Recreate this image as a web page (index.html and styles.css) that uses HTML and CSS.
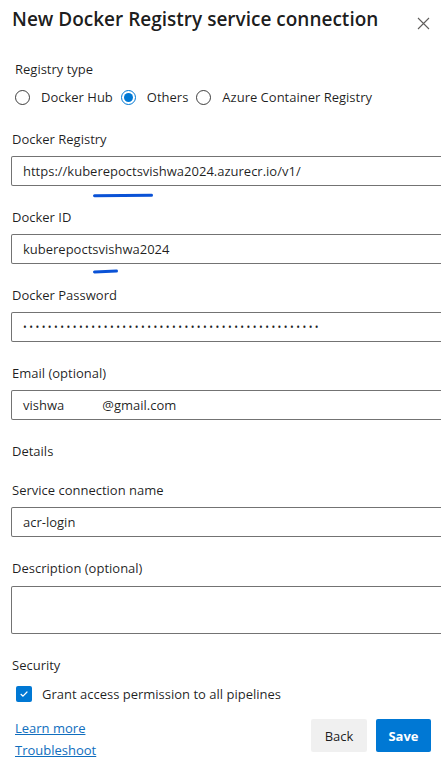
FILE: index.html
```html
<!DOCTYPE html>
<html>
<head>
<meta charset="utf-8">
<link rel="stylesheet" href="styles.css">
</head>
<body>
<div class="panel">
  <div class="header">
    <h1 class="title">New Docker Registry service connection</h1>
    <span class="close">
      <svg width="13" height="13" viewBox="0 0 13 13"><path d="M1 1L12 12M12 1L1 12" stroke="#605e5c" stroke-width="1.1" fill="none"/></svg>
    </span>
  </div>

  <div class="section">
    <div class="label">Registry type</div>
    <div class="radios">
      <label class="radio"><span class="circle"></span><span>Docker Hub</span></label>
      <label class="radio"><span class="circle checked"></span><span>Others</span></label>
      <label class="radio"><span class="circle"></span><span>Azure Container Registry</span></label>
    </div>
  </div>

  <div class="field first">
    <div class="label">Docker Registry</div>
    <div class="input">https://kuberepoctsvishwa2024.azurecr.io/v1/</div>
    <span class="mark mark-1"></span>
  </div>

  <div class="field">
    <div class="label">Docker ID</div>
    <div class="input">kuberepoctsvishwa2024</div>
    <span class="mark mark-2"></span>
  </div>

  <div class="field">
    <div class="label">Docker Password</div>
    <div class="input dots">••••••••••••••••••••••••••••••••••••••••••••••••</div>
  </div>

  <div class="field">
    <div class="label">Email (optional)</div>
    <div class="input">vishwa<span class="gap"></span>@gmail.com</div>
  </div>

  <div class="group-title">Details</div>

  <div class="field tight">
    <div class="label">Service connection name</div>
    <div class="input">acr-login</div>
  </div>

  <div class="field">
    <div class="label">Description (optional)</div>
    <div class="input area"></div>
  </div>

  <div class="group-title security">Security</div>
  <label class="check-row">
    <span class="checkbox">
      <svg width="10" height="10" viewBox="0 0 10 10"><path d="M2 5.3L4 7.2L8 3" stroke="#fff" stroke-width="1.2" fill="none" stroke-linecap="round" stroke-linejoin="round"/></svg>
    </span>
    <span>Grant access permission to all pipelines</span>
  </label>

  <div class="footer">
    <div class="links">
      <a class="link" href="#">Learn more</a>
      <a class="link" href="#">Troubleshoot</a>
    </div>
    <div class="buttons">
      <button class="btn">Back</button>
      <button class="btn primary">Save</button>
    </div>
  </div>
</div>
</body>
</html>
```

FILE: styles.css
```css
html, body {
  margin: 0;
  padding: 0;
  background: #fff;
  overflow: hidden;
}
body {
  width: 441px;
  height: 757px;
  font-family: "Segoe UI", "Open Sans", "Liberation Sans", sans-serif;
  font-size: 13px;
  color: rgba(0, 0, 0, 0.88);
}
.panel {
  padding: 0 0 0 11px;
  display: flex;
  flex-direction: column;
}
.header {
  display: flex;
  align-items: center;
  justify-content: space-between;
  height: 38px;
  padding-right: 11px;
}
.title {
  margin: 0;
  font-size: 19px;
  font-weight: 600;
  line-height: 28px;
  padding-left: 1px;
  color: rgba(0, 0, 0, 0.9);
}
.close {
  display: flex;
  margin-top: 8px;
}
.section {
  padding-left: 4px;
  margin-top: 21px;
}
.label {
  line-height: 20px;
  height: 20px;
}
.field > .label {
  padding-left: 1px;
}
.radios {
  display: flex;
  align-items: center;
  margin-top: 8px;
  height: 20px;
}
.radio {
  display: flex;
  align-items: center;
  gap: 11px;
  margin-right: 8px;
}
.circle {
  width: 13px;
  height: 13px;
  border: 1px solid rgba(0, 0, 0, 0.75);
  border-radius: 50%;
  box-sizing: content-box;
  position: relative;
}
.circle.checked {
  border-color: #0078d4;
}
.circle.checked::after {
  content: "";
  position: absolute;
  left: 2px;
  top: 2px;
  width: 9px;
  height: 9px;
  border-radius: 50%;
  background: #0078d4;
}
.field {
  position: relative;
  margin-top: 21px;
}
.field.first {
  margin-top: 22px;
}
.field.tight {
  margin-top: 19px;
}
.input {
  margin-top: 7px;
  height: 30px;
  box-sizing: border-box;
  border: 1px solid rgba(0, 0, 0, 0.55);
  border-right: none;
  border-radius: 2px 0 0 2px;
  padding-left: 11px;
  line-height: 28px;
  white-space: nowrap;
}
.input.dots {
  font-size: 10px;
  letter-spacing: 2.45px;
}
.input.area {
  height: 48px;
  margin-top: 8px;
}
.gap {
  display: inline-block;
  width: 38px;
}
.mark {
  position: absolute;
  height: 3px;
  border-radius: 2px;
  background: #0a52d6;
}
.mark-1 {
  left: 82px;
  top: 65px;
  width: 60px;
  transform: rotate(-0.6deg);
}
.mark-2 {
  left: 82px;
  top: 63px;
  width: 25px;
  transform: rotate(-2deg);
}
.group-title {
  margin-top: 21px;
  line-height: 20px;
  padding-left: 1px;
}
.check-row {
  display: flex;
  align-items: center;
  gap: 10px;
  margin-top: 9px;
  padding-left: 5px;
  line-height: 20px;
}
.checkbox {
  width: 16px;
  height: 16px;
  border-radius: 2px;
  background: #0078d4;
  display: flex;
  align-items: center;
  justify-content: center;
}
.footer {
  display: flex;
  justify-content: space-between;
  align-items: flex-start;
  margin-top: 13px;
  padding-right: 10px;
}
.links {
  display: flex;
  flex-direction: column;
  padding-left: 4px;
}
.link {
  color: #106ebe;
  text-decoration: underline;
  line-height: 22px;
}
.buttons {
  display: flex;
  gap: 9px;
  margin-top: 2px;
}
.btn {
  font-family: inherit;
  font-size: 13px;
  font-weight: 500;
  height: 33px;
  width: 56px;
  border: none;
  border-radius: 2px;
  background: rgba(0, 0, 0, 0.06);
  color: rgba(0, 0, 0, 0.9);
  padding: 0;
}
.btn.primary {
  width: 55px;
  font-weight: 700;
  background: #0078d4;
  color: #fff;
}
```
